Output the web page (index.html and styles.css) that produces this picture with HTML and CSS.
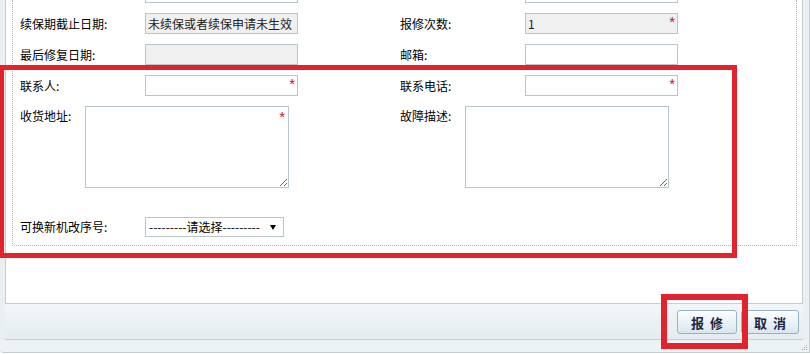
FILE: index.html
```html
<!DOCTYPE html>
<html lang="zh-CN">
  <head>
    <meta charset="utf-8" />
    <title>报修</title>
    <link rel="stylesheet" href="styles.css">
  </head>
  <body>
    <div class="window">
      <div class="panel">
        <div class="fieldset">
          <div class="rows">
            <div class="row">
              <div class="half">
                <span class="label"></span>
                <span class="field"><input class="text" type="text" /></span>
              </div>
              <div class="half">
                <span class="label"></span>
                <span class="field"><input class="text" type="text" /></span>
              </div>
            </div>

            <div class="row">
              <div class="half">
                <span class="label">续保期截止日期:</span>
                <span class="field"><input class="text readonly" type="text" value="未续保或者续保申请未生效" readonly /></span>
              </div>
              <div class="half">
                <span class="label">报修次数:</span>
                <span class="field">
                  <input class="text readonly" type="text" value="1" readonly />
                  <span class="req">*</span>
                </span>
              </div>
            </div>

            <div class="row">
              <div class="half">
                <span class="label">最后修复日期:</span>
                <span class="field"><input class="text readonly" type="text" readonly /></span>
              </div>
              <div class="half">
                <span class="label">邮箱:</span>
                <span class="field"><input class="text" type="text" /></span>
              </div>
            </div>

            <div class="row">
              <div class="half">
                <span class="label">联系人:</span>
                <span class="field">
                  <input class="text" type="text" />
                  <span class="req">*</span>
                </span>
              </div>
              <div class="half">
                <span class="label">联系电话:</span>
                <span class="field">
                  <input class="text" type="text" />
                  <span class="req">*</span>
                </span>
              </div>
            </div>

            <div class="row row-area">
              <div class="half">
                <span class="label label-short">收货地址:</span>
                <span class="field">
                  <textarea class="area"></textarea>
                  <span class="req req-area">*</span>
                </span>
              </div>
              <div class="half">
                <span class="label label-short">故障描述:</span>
                <span class="field"><textarea class="area"></textarea></span>
              </div>
            </div>

            <div class="row row-select">
              <div class="half">
                <span class="label">可换新机改序号:</span>
                <span class="field select-wrap">
                  <select class="select">
                    <option>---------请选择---------</option>
                  </select>
                </span>
              </div>
            </div>
          </div>
        </div>
      </div>

      <div class="footer">
        <button class="btn btn-ok" type="button">报修</button>
        <button class="btn btn-cancel" type="button">取消</button>
      </div>
      <div class="bottom"></div>

      <svg class="grip" width="7" height="7" viewBox="0 0 7 7">
        <rect x="5" y="1" width="1" height="1" fill="#9aa6ab" />
        <rect x="3" y="3" width="1" height="1" fill="#9aa6ab" />
        <rect x="5" y="3" width="1" height="1" fill="#9aa6ab" />
        <rect x="1" y="5" width="1" height="1" fill="#9aa6ab" />
        <rect x="3" y="5" width="1" height="1" fill="#9aa6ab" />
        <rect x="5" y="5" width="1" height="1" fill="#9aa6ab" />
      </svg>

      <!-- annotation boxes -->
      <div class="mark mark-form"></div>
      <div class="mark mark-btn"></div>
    </div>
  </body>
</html>
```

FILE: styles.css
```css
body {
  margin: 0;
  background: #fff;
  font-family: "Noto Sans CJK SC", "Liberation Sans", sans-serif;
  font-size: 12px;
  color: #000;
}
.window {
  position: relative;
  width: 809px;
  height: 352px;
  background: #e9eff2;
  border-right: 1px solid #c3cdd2;
  border-bottom: 1px solid #c3cdd2;
  border-bottom-left-radius: 4px;
  overflow: hidden;
}
.panel {
  margin-left: 5px;
  width: 798px;
  height: 304px;
  box-sizing: border-box;
  background: #fff;
  border: 1px solid #c1ced3;
  border-top: none;
  padding: 0 5px 0 6px;
}
.fieldset {
  height: 246px;
  box-sizing: border-box;
  border: 1px dotted #b4b4b4;
  border-top: none;
  overflow: hidden;
}
.rows {
  margin-top: -23px;
}
.row {
  display: flex;
  padding: 5px 0;
}
.half {
  display: flex;
  align-items: center;
  width: 380px;
  padding-left: 7px;
  box-sizing: border-box;
}
.label {
  width: 125px;
  line-height: 21px;
  white-space: nowrap;
}
.label-short {
  width: 65px;
  line-height: 16px;
}
.field {
  position: relative;
  display: block;
}
.text {
  display: block;
  width: 153px;
  height: 21px;
  box-sizing: border-box;
  margin: 0;
  padding: 0 3px;
  border: 1px solid #b7c6ca;
  background: #fff;
  font-family: "Noto Sans CJK SC", "Liberation Sans", sans-serif;
  font-size: 12px;
  color: #222;
  outline: none;
}
.readonly {
  background: #f0f0f0;
  padding-left: 2px;
}
.req {
  position: absolute;
  top: 1px;
  right: 3px;
  color: #c8102e;
  font-family: "Liberation Sans", sans-serif;
  font-size: 15px;
  line-height: 15px;
}
.req-area {
  top: 3px;
  right: 4px;
}
.row-area {
  padding: 5px 0 6px;
}
.row-area .half {
  align-items: flex-start;
}
.row-area .label {
  padding-top: 2px;
}
.area {
  display: block;
  width: 204px;
  height: 82px;
  box-sizing: border-box;
  margin: 0;
  border: 1px solid #b7c6ca;
  background: #fff;
  outline: none;
}
.row-select {
  padding: 22px 0 9px;
}
.select-wrap::after {
  content: "";
  position: absolute;
  right: 8px;
  top: 8px;
  border-left: 3px solid transparent;
  border-right: 3px solid transparent;
  border-top: 5px solid #000;
}
.select {
  display: block;
  width: 139px;
  height: 20px;
  box-sizing: border-box;
  margin: 0;
  padding: 0 0 0 3px;
  border: 1px solid #b7c6ca;
  border-radius: 0;
  background: #fff;
  appearance: none;
  -webkit-appearance: none;
  font-family: "Noto Sans CJK SC", "Liberation Sans", sans-serif;
  font-size: 12px;
  color: #000;
}
.footer {
  display: flex;
  justify-content: flex-end;
  gap: 4px;
  margin-left: 5px;
  width: 798px;
  height: 36px;
  box-sizing: border-box;
  padding: 6px 4px 0 0;
  background: linear-gradient(#f2f6f8, #e5ecef);
  border-bottom: 1px solid #c6d1d5;
}
.bottom {
  height: 12px;
  background: #edf2f4;
}
.btn {
  height: 24px;
  margin: 0;
  padding: 0;
  border: 1px solid #93b3c6;
  border-radius: 3px;
  background: linear-gradient(#fdfeff, #e9f1f6 55%, #d9e6ee);
  box-shadow: inset 0 1px 0 #fff;
  font-family: "Noto Sans CJK SC", "Liberation Sans", sans-serif;
  font-size: 13px;
  font-weight: bold;
  color: #1c2541;
  letter-spacing: 6px;
  text-indent: 6px;
}
.btn-ok {
  width: 60px;
}
.btn-cancel {
  width: 58px;
}
.grip {
  position: absolute;
  right: 1px;
  bottom: 1px;
}
.mark {
  position: absolute;
  border-style: solid;
  border-color: #e2232b;
  box-sizing: border-box;
}
.mark-form {
  left: -1px;
  top: 65px;
  width: 738px;
  height: 193px;
  border-width: 5px;
}
.mark-btn {
  left: 661px;
  top: 294px;
  width: 87px;
  height: 55px;
  border-width: 6px;
}
```
